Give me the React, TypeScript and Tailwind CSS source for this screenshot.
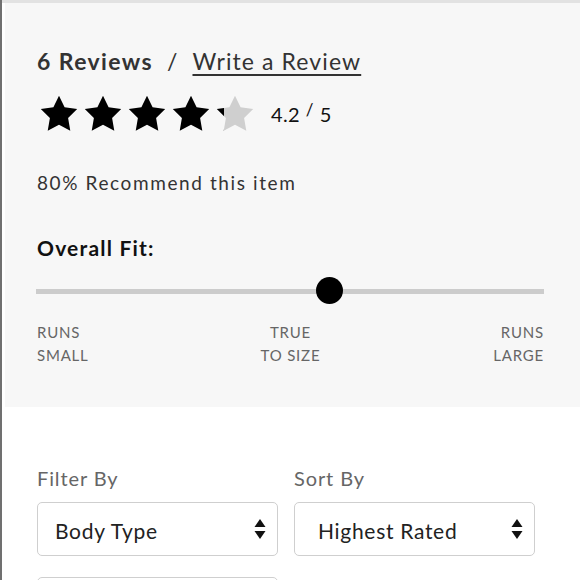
import React from "react";

const STAR =
  "M12 1.6l3.2 6.6 7.2 1-5.2 5.1 1.25 7.2L12 18.1l-6.45 3.4 1.25-7.2-5.2-5.1 7.2-1z";

function Star({ fill }: { fill: number }) {
  const id = `g${Math.round(fill * 100)}`;
  return (
    <svg width="42" height="42" viewBox="0 0 24 24">
      <defs>
        <linearGradient id={id} x1="0" x2="1" y1="0" y2="0">
          <stop offset={fill} stopColor="#000" />
          <stop offset={fill} stopColor="#cfcfcf" />
        </linearGradient>
      </defs>
      <path d={STAR} fill={`url(#${id})`} />
    </svg>
  );
}

function Arrows() {
  return (
    <svg width="12" height="22" viewBox="0 0 12 22">
      <path d="M6 1L11.5 9H0.5z" fill="#111" />
      <path d="M6 21L11.5 13H0.5z" fill="#111" />
    </svg>
  );
}

function Select({ label, pad }: { label: string; pad: string }) {
  return (
    <div
      className={`w-[241px] h-[54px] bg-white border border-[#cfcfcf] rounded-[5px] flex items-center justify-between ${pad} pr-[11px] text-[21px] tracking-[0.7px] text-[#222]`}
    >
      <span className="pt-[4px]">{label}</span>
      <Arrows />
    </div>
  );
}

export default function App() {
  const ratings = [1, 1, 1, 1, 0.2];
  return (
    <div
      className="w-[580px] h-[580px] overflow-hidden bg-white border-l-2 border-[#707070] flex flex-col"
      style={{ fontFamily: "Lato, 'Open Sans', sans-serif" }}
    >
      <div className="h-[3px] bg-[#e2e2e2] shrink-0" />
      {/* Review summary */}
      <div className="ml-[3px] bg-[#f7f7f7] h-[404px] shrink-0 pl-[32px] pr-[34px] pt-[43px]">
        <div className="flex items-center text-[23px] text-[#333] h-[30px]">
          <span className="font-bold tracking-[1.4px]">6 Reviews</span>
          <span className="ml-[14px] mr-[15px]">/</span>
          <span className="underline underline-offset-[4px] decoration-[1.5px] tracking-[1.1px]">
            Write a Review
          </span>
        </div>
        <div className="flex items-center mt-[15px] h-[46px]">
          <div className="flex gap-[2px] ml-[1px]">
            {ratings.map((r, i) => (
              <Star key={i} fill={r} />
            ))}
          </div>
          <span className="ml-[15px] text-[20px] text-[#111] flex items-center tracking-[0.3px]">
            4.2
            <span className="text-[17px] ml-[6px] mr-[6px] -translate-y-[4px]">/</span>
            5
          </span>
        </div>
        <div className="mt-[33px] text-[19px] text-[#333] tracking-[1.6px] h-[26px] flex items-center">
          80% Recommend this item
        </div>
        <div className="mt-[39px] text-[21px] font-bold text-[#111] h-[26px] flex items-center tracking-[1.2px]">
          Overall Fit:
        </div>
        <div className="relative mt-[16px] h-[28px] flex items-center -ml-[1px] mr-[2px]">
          <div className="w-full h-[5px] bg-[#cccccc]" />
          <div className="absolute left-[280px] top-0 w-[27px] h-[27px] rounded-full bg-black" />
        </div>
        <div className="mt-[16px] grid grid-cols-3 text-[15px] leading-[23px] text-[#666] tracking-[0.8px] mr-[2px]">
          <div>
            RUNS
            <br />
            SMALL
          </div>
          <div className="text-center">
            TRUE
            <br />
            TO SIZE
          </div>
          <div className="text-right">
            RUNS
            <br />
            LARGE
          </div>
        </div>
      </div>
      {/* Filters */}
      <div className="pl-[35px] pt-[56px]">
        <div className="flex gap-[16px]">
          <div className="flex flex-col">
            <span className="text-[20px] text-[#666] h-[30px] flex items-center tracking-[0.9px]">
              Filter By
            </span>
            <div className="mt-[9px]">
              <Select label="Body Type" pad="pl-[17px]" />
            </div>
          </div>
          <div className="flex flex-col">
            <span className="text-[20px] text-[#666] h-[30px] flex items-center tracking-[0.9px]">
              Sort By
            </span>
            <div className="mt-[9px]">
              <Select label="Highest Rated" pad="pl-[23px]" />
            </div>
          </div>
        </div>
        <div className="mt-[21px] w-[241px] h-[54px] bg-white border border-[#cfcfcf] rounded-[5px]" />
      </div>
    </div>
  );
}
